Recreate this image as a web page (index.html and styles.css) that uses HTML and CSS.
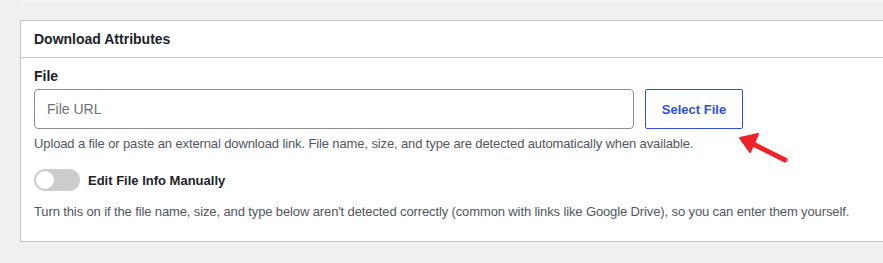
FILE: index.html
```html
<!DOCTYPE html>
<html>
<head>
<meta charset="utf-8">
<link rel="stylesheet" href="styles.css">
</head>
<body>
<div class="topline"></div>
<div class="card">
  <div class="card-header">Download Attributes</div>
  <div class="card-body">
    <div class="field-label">File</div>
    <div class="input-row">
      <input class="url-input" type="text" placeholder="File URL">
      <button class="select-btn">Select File</button>
    </div>
    <p class="help">Upload a file or paste an external download link. File name, size, and type are detected automatically when available.</p>
    <div class="toggle-row">
      <span class="toggle"><span class="knob"></span></span>
      <span class="toggle-label">Edit File Info Manually</span>
    </div>
    <p class="help desc">Turn this on if the file name, size, and type below aren't detected correctly (common with links like Google Drive), so you can enter them yourself.</p>
  </div>
</div>
<svg class="arrow" width="60" height="40" viewBox="0 0 60 40">
  <line x1="50" y1="30" x2="12" y2="11" stroke="#f0232a" stroke-width="5" stroke-linecap="round"/>
  <polygon points="5,8 23,4 15,22" fill="#f0232a" stroke="#f0232a" stroke-width="2" stroke-linejoin="round"/>
</svg>
</body>
</html>
```
FILE: styles.css
```css
html, body {
  margin: 0;
  padding: 0;
}
body {
  background: #f0f0f1;
  font-family: "Liberation Sans", Arial, sans-serif;
  color: #1d2327;
  overflow: hidden;
  width: 883px;
  height: 263px;
  position: relative;
}
.topline {
  height: 2px;
  margin-left: 20px;
  background: #f5f5f5;
  margin-bottom: 18px;
}
.card {
  margin-left: 20px;
  width: 900px;
  background: #fff;
  border: 1px solid #c3c4c7;
  border-right: none;
}
.card-header {
  height: 36px;
  display: flex;
  align-items: center;
  padding: 0 13px;
  font-size: 14px;
  font-weight: 700;
  border-bottom: 1px solid #c3c4c7;
}
.card-body {
  padding: 8px 13px 20px;
}
.field-label {
  font-size: 14px;
  font-weight: 700;
  line-height: 20px;
  margin-bottom: 3px;
}
.input-row {
  display: flex;
  gap: 11px;
}
.url-input {
  box-sizing: border-box;
  width: 600px;
  height: 40px;
  border: 1px solid #8c8f94;
  border-radius: 4px;
  padding: 0 12px;
  font-family: inherit;
  font-size: 14px;
  color: #2c3338;
  outline: none;
}
.url-input::placeholder {
  color: #6e7175;
}
.select-btn {
  box-sizing: border-box;
  width: 98px;
  height: 40px;
  background: #fff;
  border: 1px solid #3150d8;
  border-radius: 2px;
  color: #3150d8;
  font-family: inherit;
  font-size: 13px;
  font-weight: 700;
  padding: 0;
}
.help {
  margin: 6px 0 0;
  font-size: 13px;
  line-height: 18px;
  letter-spacing: -0.12px;
  color: #50575e;
}
.toggle-row {
  display: flex;
  align-items: center;
  gap: 8px;
  margin-top: 16px;
  height: 22px;
}
.toggle {
  box-sizing: border-box;
  width: 46px;
  height: 22px;
  border-radius: 11px;
  background: #cccccc;
  padding: 2px;
  display: flex;
}
.knob {
  width: 18px;
  height: 18px;
  border-radius: 50%;
  background: #fff;
}
.toggle-label {
  font-size: 13px;
  font-weight: 700;
  color: #1d2327;
}
.desc {
  margin-top: 12px;
}
.arrow {
  position: absolute;
  left: 735px;
  top: 130px;
}
```
